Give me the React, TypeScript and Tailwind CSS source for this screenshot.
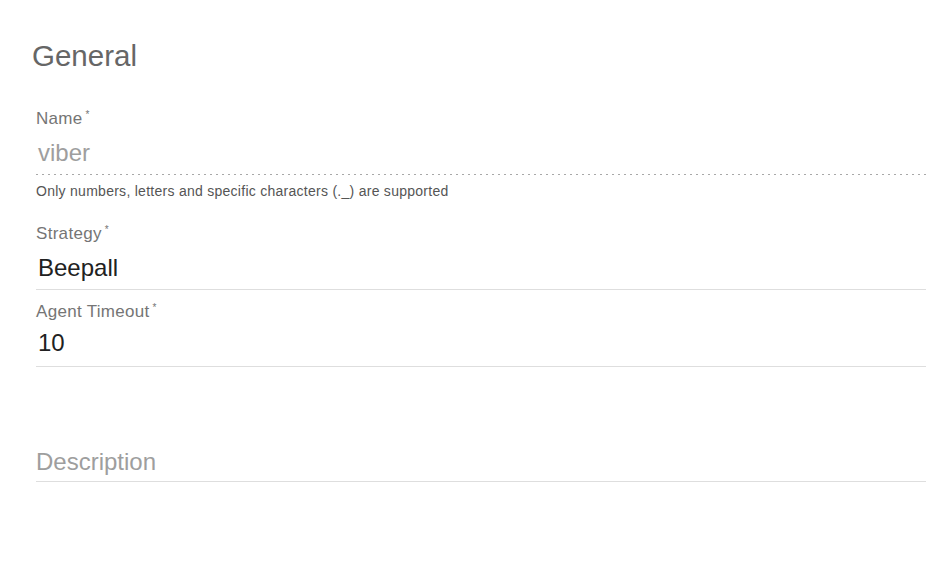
import React from "react";

const font = { fontFamily: '"Liberation Sans", Arial, sans-serif' };

function Label({ text }: { text: string }) {
  return (
    <div className="h-[20px] text-[17px] leading-[20px] tracking-[0.3px] text-[#757575] flex items-start">
      <span>{text}</span>
      <span className="ml-[3px] text-[10px] leading-[10px] mt-[1px] text-[#757575]">*</span>
    </div>
  );
}

export default function App() {
  return (
    <div className="w-[926px] h-[570px] bg-white overflow-hidden" style={font}>
      <div className="pt-[40px] pl-[32px]">
        <h1 className="text-[29.5px] leading-[32px] text-[#666666] font-normal">General</h1>
      </div>
      <div className="pl-[36px] flex flex-col">
        {/* Name */}
        <div className="mt-[37px]">
          <Label text="Name" />
        </div>
        <div className="mt-[10px] h-[28px] pl-[2px] text-[24px] leading-[28px] text-[#9e9e9e]">viber</div>
        <div className="mt-[7px] h-px bg-[repeating-linear-gradient(to_right,#a8a8a8_0_2px,transparent_2px_6px)]" />
        <div className="mt-[8px] h-[16px] text-[14px] leading-[16px] tracking-[0.27px] text-[#555555] whitespace-nowrap">
          Only numbers, letters and specific characters (._) are supported
        </div>

        {/* Strategy */}
        <div className="mt-[25px]">
          <Label text="Strategy" />
        </div>
        <div className="mt-[10px] h-[28px] pl-[2px] text-[24px] leading-[28px] text-[#212121]">Beepall</div>
        <div className="mt-[7px] h-px bg-[#dedede]" />

        {/* Agent Timeout */}
        <div className="mt-[12px]">
          <Label text="Agent Timeout" />
        </div>
        <div className="mt-[7px] h-[28px] pl-[2px] text-[24px] leading-[28px] text-[#212121]">10</div>
        <div className="mt-[9px] h-px bg-[#dedede]" />

        {/* Description */}
        <div className="mt-[81px] h-[28px] text-[24px] leading-[28px] text-[#9e9e9e]">Description</div>
        <div className="mt-[5px] h-px bg-[#dedede]" />
      </div>
    </div>
  );
}
